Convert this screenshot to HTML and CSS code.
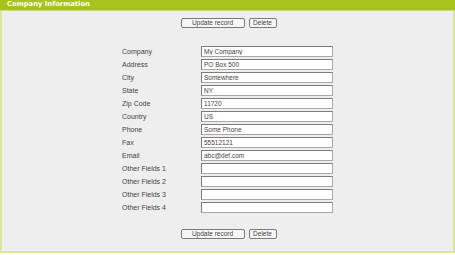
FILE: index.html
```html
<!DOCTYPE html>
<html lang="en">
<head>
    <meta charset="UTF-8">
    <title>Company Information</title>
    <link rel="stylesheet" href="styles.css">
</head>
<body>
<section class="panel">
    <div class="panel-head">Company Information</div>
    <div class="panel-body">
        <div class="actions">
            <input type="button" class="btn btn-wide" value="Update record">
            <input type="button" class="btn" value="Delete">
        </div>

        <table class="fields">
            <tr><td>Company</td><td><input type="text" value="My Company"></td></tr>
            <tr><td>Address</td><td><input type="text" value="PO Box 500"></td></tr>
            <tr><td>City</td><td><input type="text" value="Somewhere"></td></tr>
            <tr><td>State</td><td><input type="text" value="NY"></td></tr>
            <tr><td>Zip Code</td><td><input type="text" value="11720"></td></tr>
            <tr><td>Country</td><td><input type="text" value="US"></td></tr>
            <tr><td>Phone</td><td><input type="text" value="Some Phone"></td></tr>
            <tr><td>Fax</td><td><input type="text" value="55512121"></td></tr>
            <tr><td>Email</td><td><input type="text" value="abc@def.com"></td></tr>
            <tr><td>Other Fields 1</td><td><input type="text"></td></tr>
            <tr><td>Other Fields 2</td><td><input type="text"></td></tr>
            <tr><td>Other Fields 3</td><td><input type="text"></td></tr>
            <tr><td>Other Fields 4</td><td><input type="text"></td></tr>
        </table>

        <div class="actions actions-bottom">
            <input type="button" class="btn btn-wide" value="Update record">
            <input type="button" class="btn" value="Delete">
        </div>
    </div>
</section>
</body>
</html>
```

FILE: styles.css
```css
body {
    margin: 0;
    background-color: #ffffff;
    font-family: "Liberation Sans", Arial, sans-serif;
    font-size: 7px;
    color: #444444;
}

.panel {
    width: 455px;
    height: 253px;
    box-sizing: border-box;
    border: 2px solid #dbe79c;
    border-top: none;
    background-color: #eeeeee;
}

.panel-head {
    height: 10px;
    line-height: 9px;
    margin: 0 -2px;
    padding-left: 7px;
    background-color: #a8c41c;
    border-bottom: 1px solid #c8dc72;
    color: #ffffff;
    font-family: "DejaVu Sans", Verdana, sans-serif;
    font-weight: bold;
    font-size: 6.8px;
}

.panel-body {
    padding-top: 7px;
}

.actions {
    display: flex;
    justify-content: center;
    gap: 4px;
    padding-left: 2px;
}

.actions-bottom {
    margin-top: 15px;
}

.btn {
    height: 10px;
    width: 28px;
    padding: 0;
    border: 1px solid #7a7a7a;
    border-radius: 2px;
    background-color: #f6f6f6;
    font-family: "Liberation Sans", Arial, sans-serif;
    font-size: 6.5px;
    color: #444444;
    line-height: 8px;
}

.btn-wide {
    width: 64px;
}

.fields {
    margin: 17px 0 0 116px;
    border-collapse: collapse;
}

.fields td {
    padding: 0;
    height: 13px;
    vertical-align: middle;
}

.fields td:first-child {
    width: 79px;
    padding-left: 4px;
}

.fields input {
    display: block;
    width: 132px;
    height: 11px;
    box-sizing: border-box;
    margin: 0;
    padding: 0 2px;
    border: 1px solid #a8a8a8;
    border-top-color: #7c7c7c;
    border-left-color: #7c7c7c;
    background-color: #ffffff;
    font-family: "Liberation Sans", Arial, sans-serif;
    font-size: 6.5px;
    color: #444444;
}
```
